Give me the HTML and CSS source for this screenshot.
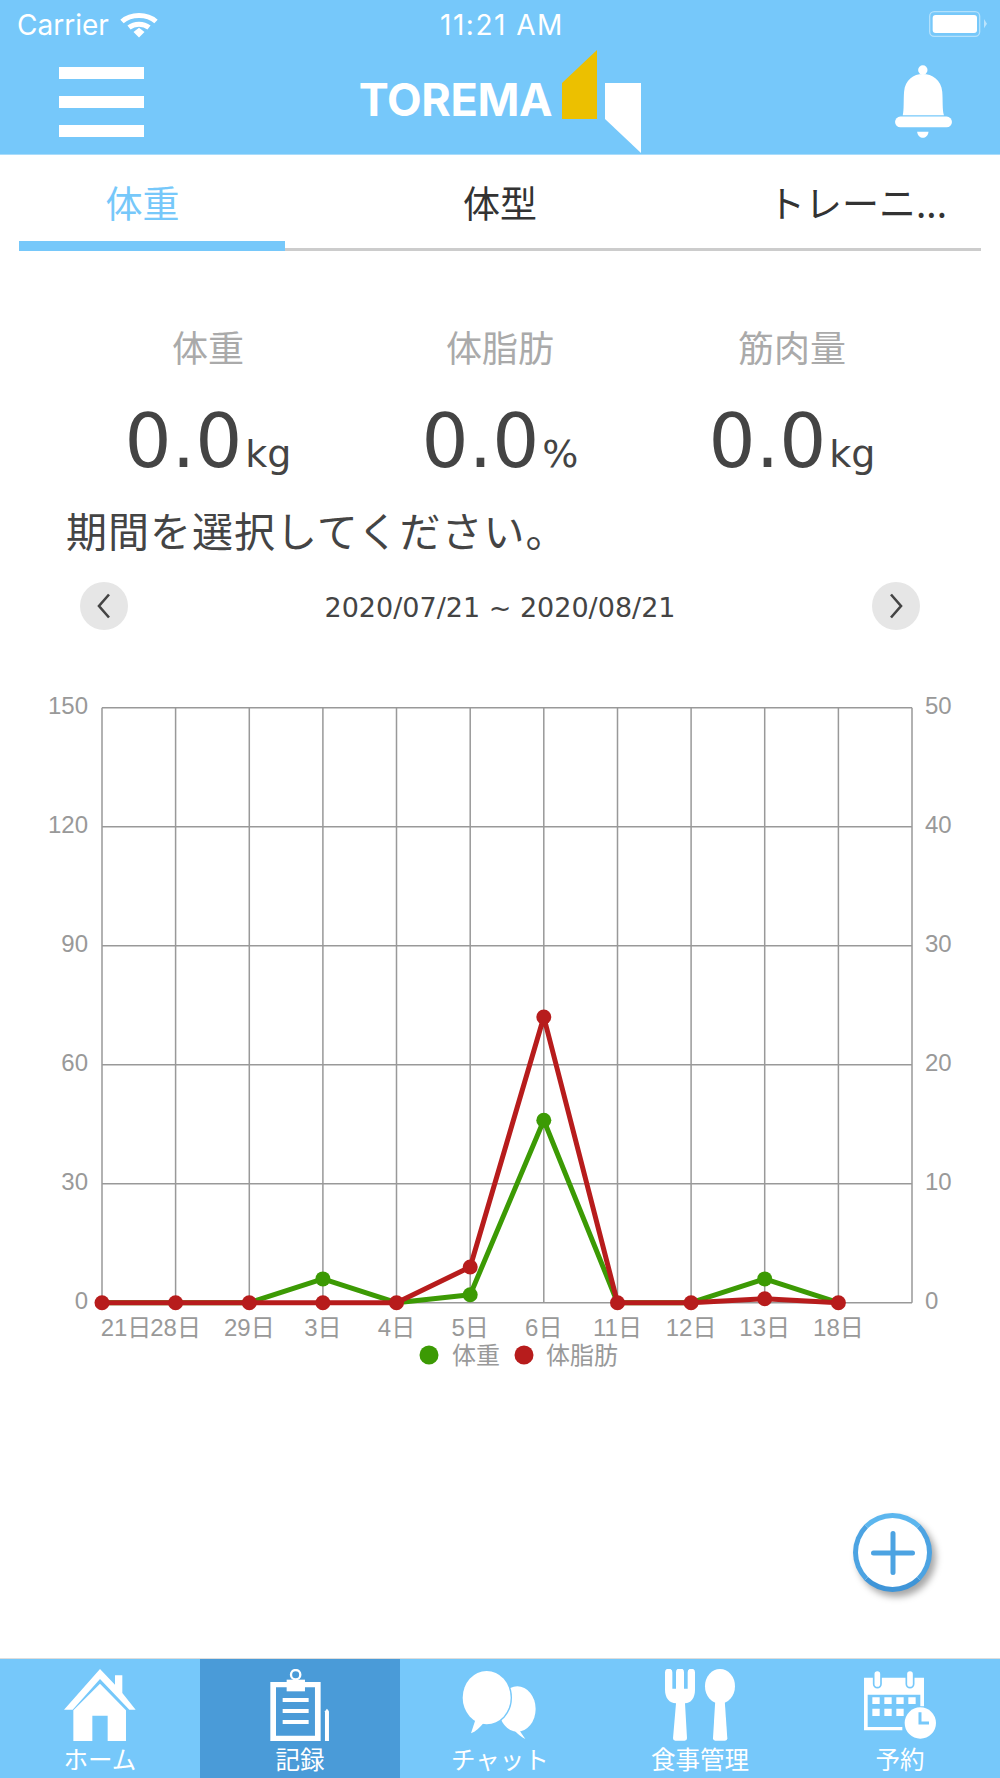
FILE: index.html
```html
<!DOCTYPE html>
<html lang="ja">
<head>
    <meta charset="utf-8">
    <title>TOREMA</title>
    <link rel="stylesheet" href="styles.css">
</head>
<body>
    <div id="app">
        <div class="status-bar">
            <div class="status-left">
                <span>Carrier</span>
                <svg class="wifi" viewBox="0 0 38 26" width="38" height="26">
                    <path d="M2 9.5C11 1.5 27 1.5 36 9.5" fill="none" stroke="#fff" stroke-width="5"/>
                    <path d="M9 15.5C14.5 11 23.5 11 29 15.5" fill="none" stroke="#fff" stroke-width="5"/>
                    <path d="M13.5 20L19 15.8L24.5 20L19 25.5Z" fill="#fff"/>
                </svg>
            </div>
            <div class="status-time">11:21 AM</div>
            <div class="status-right">
                <svg viewBox="147 34 174 78" width="58" height="26">
                    <rect x="149" y="36" width="150" height="74" rx="14" fill="none" stroke="#fff" stroke-opacity="0.45" stroke-width="4"/>
                    <rect x="158" y="46" width="133" height="54" rx="9" fill="#fff"/>
                    <path d="M312 58L321 72L312 86Z" fill="#fff" fill-opacity="0.5"/>
                </svg>
            </div>
        </div>

        <header class="app-header">
            <div class="hamburger"><span></span><span></span><span></span></div>
            <div class="logo">
                <span class="logo-text">TOREMA</span>
                <svg viewBox="562 50 79 103" width="79" height="103">
                    <path d="M562 83L597 50V119H562Z" fill="#ecc000"/>
                    <path d="M605 83H641V153L605 119Z" fill="#fff"/>
                </svg>
            </div>
            <svg class="bell" viewBox="45 195 170 218" width="57" height="73">
                <circle cx="128" cy="210" r="14" fill="#fff"/>
                <path d="M68 345C72 330 70 300 72 275C75 240 100 222 128 222C156 222 183 240 186 275C188 300 186 330 191 345Z" fill="#fff"/>
                <rect x="45" y="349" width="170" height="32" rx="16" fill="#fff"/>
                <path d="M111 394H145C142 418 114 418 111 394Z" fill="#fff"/>
            </svg>
        </header>

        <nav class="tabs">
            <div class="tab tab-active">体重</div>
            <div class="tab">体型</div>
            <div class="tab">トレーニ...</div>
            <div class="tab-ink"></div>
        </nav>

        <main class="content">
            <section class="stats">
                <div class="stat">
                    <div class="stat-label">体重</div>
                    <div class="stat-value">0.0<small>kg</small></div>
                </div>
                <div class="stat">
                    <div class="stat-label">体脂肪</div>
                    <div class="stat-value">0.0<small>%</small></div>
                </div>
                <div class="stat">
                    <div class="stat-label">筋肉量</div>
                    <div class="stat-value">0.0<small>kg</small></div>
                </div>
            </section>

            <div class="prompt">期間を選択してください。</div>

            <div class="date-row">
                <div class="round-button">
                    <svg viewBox="0 0 14 26" width="14" height="26"><path d="M12 1.5L2 13L12 24.5" fill="none" stroke="#444" stroke-width="2.6"/></svg>
                </div>
                <div class="date-range">2020/07/21 ~ 2020/08/21</div>
                <div class="round-button">
                    <svg viewBox="0 0 14 26" width="14" height="26"><path d="M2 1.5L12 13L2 24.5" fill="none" stroke="#444" stroke-width="2.6"/></svg>
                </div>
            </div>

            <svg class="chart" viewBox="0 680 1000 700" width="1000" height="700">
                <g class="grid">
                    <path d="M102 707.7H912M102 826.7H912M102 945.7H912M102 1064.7H912M102 1183.7H912M102 1302.7H912"/>
                    <path d="M102 707.7V1302.7M175.6 707.7V1302.7M249.3 707.7V1302.7M322.9 707.7V1302.7M396.5 707.7V1302.7M470.2 707.7V1302.7M543.8 707.7V1302.7M617.5 707.7V1302.7M691.1 707.7V1302.7M764.7 707.7V1302.7M838.4 707.7V1302.7M912 707.7V1302.7"/>
                </g>
                <g class="axis-left">
                    <text x="88" y="714">150</text>
                    <text x="88" y="833">120</text>
                    <text x="88" y="952">90</text>
                    <text x="88" y="1071">60</text>
                    <text x="88" y="1190">30</text>
                    <text x="88" y="1309">0</text>
                </g>
                <g class="axis-right">
                    <text x="925" y="714">50</text>
                    <text x="925" y="833">40</text>
                    <text x="925" y="952">30</text>
                    <text x="925" y="1071">20</text>
                    <text x="925" y="1190">10</text>
                    <text x="925" y="1309">0</text>
                </g>
                <g class="axis-bottom">
                    <text x="126" y="1336">21日</text>
                    <text x="175.6" y="1336">28日</text>
                    <text x="249.3" y="1336">29日</text>
                    <text x="322.9" y="1336">3日</text>
                    <text x="396.5" y="1336">4日</text>
                    <text x="470.2" y="1336">5日</text>
                    <text x="543.8" y="1336">6日</text>
                    <text x="617.5" y="1336">11日</text>
                    <text x="691.1" y="1336">12日</text>
                    <text x="764.7" y="1336">13日</text>
                    <text x="838.4" y="1336">18日</text>
                </g>
                <polyline class="line-green" points="102,1302.7 175.6,1302.7 249.3,1302.7 322.9,1278.9 396.5,1302.7 470.2,1294.8 543.8,1120.2 617.5,1302.7 691.1,1302.7 764.7,1278.9 838.4,1302.7"/>
                <g class="dots-green">
                    <circle cx="322.9" cy="1278.9" r="7.5"/>
                    <circle cx="470.2" cy="1294.8" r="7.5"/>
                    <circle cx="543.8" cy="1120.2" r="7.5"/>
                    <circle cx="764.7" cy="1278.9" r="7.5"/>
                </g>
                <polyline class="line-red" points="102,1302.7 175.6,1302.7 249.3,1302.7 322.9,1302.7 396.5,1302.7 470.2,1267 543.8,1017 617.5,1302.7 691.1,1302.7 764.7,1298.7 838.4,1302.7"/>
                <g class="dots-red">
                    <circle cx="102" cy="1302.7" r="7.5"/>
                    <circle cx="175.6" cy="1302.7" r="7.5"/>
                    <circle cx="249.3" cy="1302.7" r="7.5"/>
                    <circle cx="322.9" cy="1302.7" r="7.5"/>
                    <circle cx="396.5" cy="1302.7" r="7.5"/>
                    <circle cx="470.2" cy="1267" r="7.5"/>
                    <circle cx="543.8" cy="1017" r="7.5"/>
                    <circle cx="617.5" cy="1302.7" r="7.5"/>
                    <circle cx="691.1" cy="1302.7" r="7.5"/>
                    <circle cx="764.7" cy="1298.7" r="7.5"/>
                    <circle cx="838.4" cy="1302.7" r="7.5"/>
                </g>
                <g class="legend">
                    <circle cx="429" cy="1355" r="9.5" fill="#3c9a04"/>
                    <text x="452" y="1364">体重</text>
                    <circle cx="524" cy="1355" r="9.5" fill="#b71c1c"/>
                    <text x="546" y="1364">体脂肪</text>
                </g>
            </svg>

            <div class="fab">
                <svg viewBox="0 0 44 44" width="44" height="44"><path d="M22 2.5V41.5M2.5 22H41.5" fill="none" stroke="#4ca3e2" stroke-width="5" stroke-linecap="round"/></svg>
            </div>
        </main>

        <footer class="bottom-nav">
            <div class="nav-item">
                <svg viewBox="192 88 216 217" width="72" height="72.3">
                    <path d="M300 88L345 135V107H367V160L407 210H388L300 118L218 210H192Z" fill="#fff"/>
                    <path d="M300 132L378 212V305H323V228H277V305H220V212Z" fill="#fff"/>
                </svg>
                <span>ホーム</span>
            </div>
            <div class="nav-item nav-active">
                <svg viewBox="810 88 178 217" width="59.3" height="72.3">
                    <path d="M811 127H962V305H811ZM828 143V288H945V143Z" fill="#fff" fill-rule="evenodd"/>
                    <rect x="860" y="120" width="55" height="35" fill="#fff"/>
                    <circle cx="887" cy="105" r="14" fill="none" stroke="#fff" stroke-width="7"/>
                    <path d="M848 175H926V187H848ZM848 208H926V220H848ZM848 241H926V253H848Z" fill="#fff"/>
                    <path d="M975 215L981 207L987 215V305H975Z" fill="#fff"/>
                </svg>
                <span>記録</span>
            </div>
            <div class="nav-item">
                <svg viewBox="60 27 240 217" width="80" height="72.3">
                    <ellipse cx="232" cy="147" rx="55" ry="68" fill="#fff"/>
                    <path d="M236 208L256 237C245 232 234 222 224 212Z" fill="#fff"/>
                    <ellipse cx="140" cy="113" rx="72" ry="80" fill="#fff" stroke="#76c8fa" stroke-width="8" paint-order="stroke"/>
                    <path d="M106 180L93 220C106 216 120 202 130 190Z" fill="#fff"/>
                </svg>
                <span>チャット</span>
            </div>
            <div class="nav-item">
                <svg viewBox="492 88 210 217" width="70" height="72.3">
                    <path d="M492 98A10 10 0 0 1 514 98V147H525V98A11 11 0 0 1 549 98V147H560V98A11 11 0 0 1 582 98V150C582 175 570 190 552 191L558 296Q558 303 551 303H523Q516 303 516 296L525 191C505 190 492 175 492 150Z" fill="#fff"/>
                    <ellipse cx="657" cy="140" rx="45" ry="52" fill="#fff"/>
                    <path d="M643 180H671L679 296Q679 303 672 303H643Q636 303 636 296Z" fill="#fff"/>
                </svg>
                <span>食事管理</span>
            </div>
            <div class="nav-item">
                <svg viewBox="1090 88 216 217" width="72" height="72.3">
                    <path d="M1090 114H1270V200H1259V165H1101V262H1205V272H1090Z" fill="#fff"/>
                    <rect x="1119" y="92" width="22" height="52" rx="11" fill="#fff" stroke="#76c8fa" stroke-width="5"/>
                    <rect x="1217" y="92" width="22" height="52" rx="11" fill="#fff" stroke="#76c8fa" stroke-width="5"/>
                    <path d="M1115 173H1137V193H1115ZM1151 173H1173V193H1151ZM1187 173H1209V193H1187ZM1223 173H1245V193H1223ZM1115 207H1137V229H1115ZM1151 207H1173V229H1151ZM1187 207H1209V229H1187Z" fill="#fff"/>
                    <circle cx="1259" cy="250" r="47" fill="#fff"/>
                    <path d="M1258 218V250H1285" fill="none" stroke="#76c8fa" stroke-width="9"/>
                </svg>
                <span>予約</span>
            </div>
        </footer>
    </div>
</body>
</html>
```

FILE: styles.css
```css
body {
    margin: 0;
    background-color: #fff;
    font-family: "Noto Sans CJK JP", "Noto Sans", sans-serif;
}

#app {
    position: relative;
    width: 1000px;
    height: 1778px;
    display: flex;
    flex-direction: column;
    overflow: hidden;
}

.status-bar {
    box-sizing: border-box;
    height: 48px;
    padding: 2px 13px 0 17px;
    display: grid;
    grid-template-columns: 1fr auto 1fr;
    align-items: center;
    background-color: #76c8fa;
    color: #fff;
    font-family: Inter, "Liberation Sans", sans-serif;
    font-size: 28px;
}

.status-left {
    display: flex;
    align-items: center;
    gap: 11px;
}

.status-time {
    letter-spacing: 1.5px;
}

.status-right {
    display: flex;
    justify-content: flex-end;
    margin-top: -2px;
}

.app-header {
    height: 105px;
    padding: 1px 59px 0 59px;
    display: grid;
    grid-template-columns: 1fr auto 1fr;
    align-items: center;
    background-color: #76c8fa;
    border-bottom: 1px solid #a9dcfb;
}

.hamburger {
    width: 85px;
    display: flex;
    flex-direction: column;
    gap: 17px;
}

.hamburger span {
    height: 12px;
    background-color: #fff;
}

.logo {
    display: flex;
    align-items: center;
    gap: 10px;
}

.logo-text {
    margin-bottom: 4px;
    color: #fff;
    font-family: Inter, "Liberation Sans", sans-serif;
    font-size: 45px;
    font-weight: 700;
    line-height: 1;
    letter-spacing: -0.4px;
}

.bell {
    justify-self: end;
    margin-right: -11px;
}

.tabs {
    position: relative;
    height: 93px;
    margin: 0 19px;
    display: grid;
    grid-template-columns: 247px 1fr 247px;
    border-bottom: 3px solid #ccc;
}

.tab {
    display: flex;
    align-items: center;
    justify-content: center;
    font-size: 37px;
    color: #333;
}

.tab-active {
    color: #76c8fa;
}

.tab-ink {
    position: absolute;
    left: 0;
    bottom: -3px;
    width: 266px;
    height: 10px;
    background-color: #76c8fa;
}

.content {
    flex: 1;
    position: relative;
}

.stats {
    margin-top: 69px;
    padding: 0 62px;
    display: grid;
    grid-template-columns: repeat(3, 1fr);
    text-align: center;
}

.stat-label {
    height: 52px;
    line-height: 52px;
    font-size: 36px;
    color: #aaa;
}

.stat-value {
    height: 114px;
    padding-top: 12px;
    line-height: 114px;
    font-family: "DejaVu Sans", sans-serif;
    font-size: 74px;
    color: #444;
}

.stat-value small {
    margin-left: 3px;
    font-size: 38px;
}

.prompt {
    height: 60px;
    margin-top: 1px;
    padding-left: 66px;
    line-height: 60px;
    font-size: 41px;
    letter-spacing: 1px;
    color: #444;
}

.date-row {
    height: 48px;
    margin: 23px 80px 50px 80px;
    display: flex;
    align-items: center;
    justify-content: space-between;
}

.round-button {
    width: 48px;
    height: 48px;
    border-radius: 50%;
    background-color: #e6e6e6;
    display: flex;
    align-items: center;
    justify-content: center;
}

.date-range {
    padding-top: 2px;
    font-family: "DejaVu Sans", sans-serif;
    font-size: 27px;
    color: #444;
}

.chart {
    display: block;
}

.grid path {
    fill: none;
    stroke: #999;
    stroke-width: 1.5;
}

.chart text {
    font-family: "Liberation Sans", "Noto Sans CJK JP", sans-serif;
    font-size: 24px;
    fill: #999;
}

.axis-left text {
    text-anchor: end;
}

.axis-bottom text {
    text-anchor: middle;
}

.line-green,
.line-red {
    fill: none;
    stroke-width: 5;
    stroke-linejoin: round;
}

.line-green {
    stroke: #3c9a04;
}

.line-red {
    stroke: #b71c1c;
}

.dots-green circle {
    fill: #3c9a04;
}

.dots-red circle {
    fill: #b71c1c;
}

.fab {
    position: absolute;
    left: 853px;
    top: 1262px;
    box-sizing: border-box;
    width: 79px;
    height: 79px;
    border: 5px solid #4ca3e2;
    border-top-color: #5cb6ee;
    border-bottom-color: #3f95d8;
    border-radius: 50%;
    background-color: #fff;
    box-shadow: 4px 5px 7px rgba(0, 0, 0, 0.35);
    display: flex;
    align-items: center;
    justify-content: center;
}

.bottom-nav {
    height: 119px;
    display: grid;
    grid-template-columns: repeat(5, 1fr);
    background-color: #76c8fa;
    box-shadow: 0 -1px 0 #ddd;
}

.nav-item {
    padding-top: 10px;
    display: flex;
    flex-direction: column;
    align-items: center;
    color: #fff;
    font-size: 24.5px;
}

.nav-item svg {
    display: block;
    flex-shrink: 0;
}

.nav-item span {
    line-height: 36px;
}

.nav-active {
    background-color: #4a9bd8;
}
```
